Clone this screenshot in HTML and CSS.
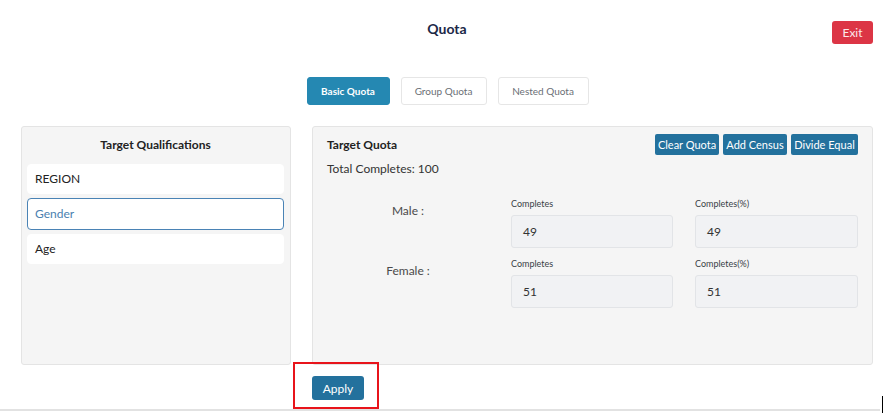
FILE: index.html
```html
<!DOCTYPE html>
<html lang="en">
<head>
<meta charset="utf-8">
<title>Quota</title>
<link rel="stylesheet" href="styles.css">
</head>
<body>
<div class="page">
  <header class="top">
    <div></div>
    <h1 class="title">Quota</h1>
    <button class="btn-exit">Exit</button>
  </header>

  <nav class="tabs">
    <button class="tab tab-active">Basic Quota</button>
    <button class="tab">Group Quota</button>
    <button class="tab">Nested Quota</button>
  </nav>

  <main class="panels">
    <section class="panel panel-left">
      <h2 class="panel-title center">Target Qualifications</h2>
      <ul class="qual-list">
        <li class="qual">REGION</li>
        <li class="qual qual-active">Gender</li>
        <li class="qual">Age</li>
      </ul>
    </section>

    <section class="panel panel-right">
      <div class="quota-head">
        <h2 class="panel-title">Target Quota</h2>
        <div class="actions">
          <button class="btn-act">Clear Quota</button>
          <button class="btn-act">Add Census</button>
          <button class="btn-act btn-wide">Divide Equal</button>
        </div>
      </div>
      <p class="total">Total Completes: 100</p>
      <div class="grid">
        <div class="row-label">Male :</div>
        <label class="field"><span class="field-label">Completes</span><span class="input">49</span></label>
        <label class="field"><span class="field-label">Completes(%)</span><span class="input">49</span></label>

        <div class="row-label">Female :</div>
        <label class="field"><span class="field-label">Completes</span><span class="input">51</span></label>
        <label class="field"><span class="field-label">Completes(%)</span><span class="input">51</span></label>
      </div>
    </section>
  </main>

  <footer class="bottom">
    <div class="apply-wrap">
      <button class="btn-apply">Apply</button>
      <span class="highlight"></span>
    </div>
  </footer>
  <div class="rule"></div>
  <span class="cursor"></span>
</div>
</body>
</html>
```

FILE: styles.css
```css
* { box-sizing: border-box; }
html, body { margin: 0; padding: 0; background: #fff; }
body {
  font-family: Lato, "Noto Sans", "Liberation Sans", sans-serif;
  color: #212529;
  font-size: 12px;
  width: 889px;
  height: 413px;
  overflow: hidden;
}
.page { position: relative; height: 413px; }
button { font-family: inherit; cursor: pointer; }

.top {
  display: grid;
  grid-template-columns: 1fr auto 1fr;
  align-items: start;
  padding: 21px 16px 0 21px;
  height: 77px;
}
.title {
  margin: 0;
  margin-top: -1px;
  font-size: 14px;
  font-weight: 700;
  color: #1b2847;
  line-height: 18px;
}
.btn-exit {
  justify-self: end;
  width: 41px;
  height: 23px;
  border: none;
  border-radius: 3px;
  background: #dc3545;
  color: #fbe9eb;
  font-size: 12px;
  padding: 0;
}

.tabs {
  display: flex;
  justify-content: center;
  gap: 11px;
  height: 49px;
  padding-left: 6px;
}
.tab {
  height: 28px;
  padding: 0;
  border: 1px solid #e6e6e6;
  background: #fff;
  border-radius: 3px;
  font-size: 10px;
  color: #6b6f76;
}
.tab:nth-child(1) { width: 83px; }
.tab:nth-child(2) { width: 86px; }
.tab:nth-child(3) { width: 91px; }
.tab-active {
  background: #2588b2;
  border-color: #2588b2;
  color: #fff;
  font-weight: 700;
}

.panels {
  display: flex;
  gap: 21px;
  padding: 0 16px 0 21px;
  height: 239px;
}
.panel {
  background: #f5f5f5;
  border: 1px solid #e4e4e4;
  border-radius: 3px;
}
.panel-left { width: 270px; padding: 10px 6px 0 5px; }
.panel-right { flex: 1; padding: 7px 14px 0 14px; }

.panel-title {
  margin: 0;
  font-size: 12px;
  font-weight: 700;
  color: #222;
  line-height: 16px;
}
.center { text-align: center; }

.qual-list {
  list-style: none;
  margin: 11px 0 0;
  padding: 0;
  display: flex;
  flex-direction: column;
  gap: 4px;
}
.qual {
  height: 30px;
  line-height: 28px;
  padding: 0 7px;
  background: #fff;
  border: 1px solid #fff;
  border-radius: 4px;
  font-size: 12px;
  color: #222;
}
.qual-active {
  border-color: #4a83b5;
  color: #4a7fb0;
  height: 32px;
  line-height: 30px;
}

.quota-head {
  display: flex;
  justify-content: space-between;
  align-items: center;
}
.actions { display: flex; gap: 4px; }
.btn-act {
  width: 64px;
  height: 21px;
  padding: 0;
  border: none;
  border-radius: 2px;
  background: #23719d;
  color: #fff;
  font-size: 11px;
}
.btn-wide { width: 67px; }

.total {
  margin: 6px 0 0;
  line-height: 16px;
  font-size: 12px;
  color: #333;
}

.grid {
  display: grid;
  grid-template-columns: 162px 162px 163px;
  column-gap: 22px;
  row-gap: 10px;
  margin-top: 21px;
}
.row-label {
  text-align: center;
  padding-top: 5px;
  font-size: 12px;
  color: #4a4a4a;
}
.field { display: flex; flex-direction: column; }
.field-label {
  font-size: 9px;
  line-height: 12px;
  color: #3a3f46;
  margin-bottom: 5px;
}
.input {
  height: 33px;
  line-height: 31px;
  padding: 0 11px;
  background: #f1f2f4;
  border: 1px solid #e2e4e7;
  border-radius: 3px;
  font-size: 12px;
  color: #333;
}

.bottom { padding: 11px 0 0 312px; }
.apply-wrap { position: relative; width: 52px; }
.btn-apply {
  width: 52px;
  height: 24px;
  border: none;
  border-radius: 3px;
  background: #23719d;
  color: #fff;
  font-size: 12px;
  padding: 0;
}
.highlight {
  position: absolute;
  left: -19px;
  top: -14px;
  width: 86px;
  height: 47px;
  border: 2px solid #e8141b;
}
.rule {
  position: absolute;
  left: 0;
  top: 409px;
  width: 880px;
  height: 2px;
  background: #e2e2e2;
}
.cursor {
  position: absolute;
  left: 882px;
  top: 396px;
  width: 1px;
  height: 17px;
  background: #000;
}
```
